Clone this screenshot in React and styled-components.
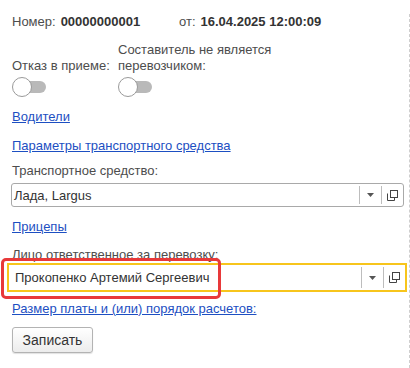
import React from 'react';
import styled, { createGlobalStyle } from 'styled-components';

const GlobalStyle = createGlobalStyle`
  body {
    margin: 0;
    background: #fff;
    font-family: Arial, "Liberation Sans", sans-serif;
    font-size: 13px;
    color: #4d4d4d;
  }
`;

const Form = styled.div`
  box-sizing: border-box;
  width: 410px;
  min-height: calc(100vh - 14px);
  margin-top: 14px;
  padding: 0 5px 0 12px;
  border-right: 1px dashed #cfcfcf;
  display: flex;
  flex-direction: column;
`;

const HeaderRow = styled.div`
  display: grid;
  grid-template-columns: 167px auto 1fr;
  align-items: center;
  line-height: 16px;
`;

const Pair = styled.div`
  display: flex;
  gap: 5px;
`;

const Value = styled.span`
  font-weight: bold;
  color: #333;
`;

const Toggles = styled.div`
  display: grid;
  grid-template-columns: 106px 160px;
  align-items: end;
  margin-top: 12px;
`;

const ToggleField = styled.div`
  display: flex;
  flex-direction: column;
  gap: 3px;
`;

const ToggleLabel = styled.div`
  line-height: 16px;
`;

const Switch = styled.div`
  position: relative;
  width: 34px;
  height: 20px;

  &::before {
    content: '';
    position: absolute;
    left: 4px;
    right: 0;
    top: 4px;
    height: 12px;
    border-radius: 6px;
    background: #b9b9b9;
  }

  &::after {
    content: '';
    position: absolute;
    left: 0;
    top: 0;
    box-sizing: border-box;
    width: 20px;
    height: 20px;
    border-radius: 50%;
    background: #fff;
    border: 1px solid #9a9a9a;
  }
`;

const Link = styled.a`
  display: block;
  width: fit-content;
  line-height: 16px;
  color: #1d4fc2;
  text-decoration: underline;
  margin-top: ${(p) => p.$top}px;
  cursor: pointer;
`;

const Label = styled.div`
  line-height: 16px;
  margin-top: ${(p) => p.$top}px;
`;

const FieldWrap = styled.div`
  position: relative;
  margin-top: ${(p) => p.$top}px;
  margin-left: ${(p) => (p.$focused ? -5 : -1)}px;
  margin-right: ${(p) => (p.$focused ? -3 : 0)}px;
`;

const Field = styled.div`
  box-sizing: border-box;
  height: ${(p) => (p.$focused ? 29 : 24)}px;
  display: flex;
  align-items: stretch;
  border: ${(p) => (p.$focused ? '2px solid #f7c51c' : '1px solid #a9a9a9')};
  border-radius: ${(p) => (p.$focused ? 0 : 3)}px;
  background: #fff;
`;

const FieldText = styled.div`
  flex: 1;
  display: flex;
  align-items: center;
  padding-left: ${(p) => (p.$focused ? 6 : 2)}px;
  font-size: 13px;
  color: #333;
`;

const FieldButton = styled.div`
  width: 21px;
  display: flex;
  align-items: center;
  justify-content: center;
  border-left: 1px solid #bdbdbd;
  margin: 2px 0;
`;

const Highlight = styled.div`
  position: absolute;
  left: -6px;
  top: -5px;
  width: 220px;
  height: 41px;
  box-sizing: border-box;
  border: 3px solid #e8393a;
  border-radius: 5px;
  pointer-events: none;
`;

const Button = styled.button`
  margin-top: 10px;
  width: 81px;
  height: 26px;
  border: 1px solid #b3b3b3;
  border-radius: 3px;
  background: linear-gradient(#ffffff, #ececec);
  box-shadow: 0 1px 1px rgba(0, 0, 0, 0.12);
  font-family: Arial, "Liberation Sans", sans-serif;
  font-size: 14px;
  color: #333;
  padding: 0;
`;

const ArrowIcon = () => (
  <svg width="7" height="4" viewBox="0 0 7 4">
    <path d="M0 0H7L3.5 4Z" fill="#555" />
  </svg>
);

const OpenIcon = () => (
  <svg width="11" height="11" viewBox="0 0 11 11" fill="none" stroke="#444" strokeWidth="1">
    <rect x="3.5" y="0.5" width="7" height="7" />
    <path d="M0.5 3.5V10.5H7.5V8" />
  </svg>
);

const InputField = ({ value, focused, top, children }) => (
  <FieldWrap $top={top} $focused={focused}>
    <Field $focused={focused}>
      <FieldText $focused={focused}>{value}</FieldText>
      <FieldButton>
        <ArrowIcon />
      </FieldButton>
      <FieldButton>
        <OpenIcon />
      </FieldButton>
    </Field>
    {children}
  </FieldWrap>
);

const App = () => (
  <>
    <GlobalStyle />
    <Form>
      <HeaderRow>
        <Pair>
          <span>Номер:</span>
          <Value>00000000001</Value>
        </Pair>
        <Pair>
          <span>от:</span>
          <Value>16.04.2025 12:00:09</Value>
        </Pair>
      </HeaderRow>

      <Toggles>
        <ToggleField>
          <ToggleLabel>Отказ в приеме:</ToggleLabel>
          <Switch />
        </ToggleField>
        <ToggleField>
          <ToggleLabel>Составитель не является перевозчиком:</ToggleLabel>
          <Switch />
        </ToggleField>
      </Toggles>

      <Link $top={12}>Водители</Link>
      <Link $top={13}>Параметры транспортного средства</Link>
      <Label $top={9}>Транспортное средство:</Label>
      <InputField top={4} value="Лада, Largus" />
      <Link $top={12}>Прицепы</Link>
      <Label $top={12}>Лицо ответственное за перевозку:</Label>
      <InputField top={0} focused value="Прокопенко Артемий Сергеевич">
        <Highlight />
      </InputField>
      <Link $top={9}>Размер платы и (или) порядок расчетов:</Link>
      <Button>Записать</Button>
    </Form>
  </>
);

export default App;
